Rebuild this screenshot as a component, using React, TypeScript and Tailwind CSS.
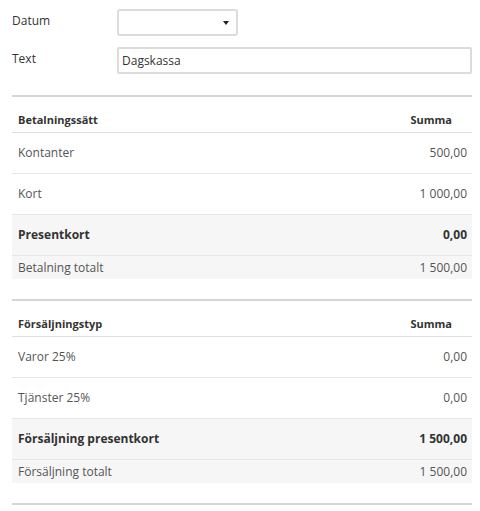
import React from "react";

type Row = { label: string; value: string; kind?: "bold" | "total" };

const payments: Row[] = [
  { label: "Kontanter", value: "500,00" },
  { label: "Kort", value: "1 000,00" },
  { label: "Presentkort", value: "0,00", kind: "bold" },
  { label: "Betalning totalt", value: "1 500,00", kind: "total" },
];

const sales: Row[] = [
  { label: "Varor 25%", value: "0,00" },
  { label: "Tjänster 25%", value: "0,00" },
  { label: "Försäljning presentkort", value: "1 500,00", kind: "bold" },
  { label: "Försäljning totalt", value: "1 500,00", kind: "total" },
];

function SumTable({ title, rows }: { title: string; rows: Row[] }) {
  return (
    <div>
      <div className="flex items-end justify-between border-b border-[#dedede] pt-[15px] pb-[4px] pl-[6px] pr-[20px] text-[11px] font-bold leading-[16px] text-[#333]">
        <span>{title}</span>
        <span>Summa</span>
      </div>
      {rows.map((r) => {
        if (r.kind === "total") {
          return (
            <div
              key={r.label}
              className="flex h-[23px] items-center justify-between bg-[#f6f6f6] pl-[6px] pr-[5px] text-[12px] text-[#555]"
            >
              <span>{r.label}</span>
              <span>{r.value}</span>
            </div>
          );
        }
        const bold = r.kind === "bold";
        return (
          <div
            key={r.label}
            className={
              bold
                ? "flex h-[41px] items-center justify-between border-b border-[#e6e6e6] bg-[#f6f6f6] pl-[6px] pr-[5px] text-[12px] font-bold text-[#333]"
                : "flex h-[41px] items-center justify-between border-b border-[#e6e6e6] pl-[6px] pr-[5px] text-[12px] text-[#555]"
            }
          >
            <span>{r.label}</span>
            <span>{r.value}</span>
          </div>
        );
      })}
    </div>
  );
}

export default function App() {
  return (
    <div className="min-h-[511px] bg-white pt-[9px] pl-3 font-['Open_Sans',sans-serif] text-[#333]">
      <div className="w-[460px]">
        {/* Datum */}
        <div className="flex items-start">
          <label className="w-[105px] pt-[3px] text-[12px] leading-[17px]">Datum</label>
          <div className="flex h-[27px] w-[121px] items-center justify-end rounded-[3px] border-2 border-[#dcdcdc] bg-white pr-[7px]">
            <span className="h-0 w-0 border-x-[3px] border-t-[4px] border-x-transparent border-t-[#222]" />
          </div>
        </div>

        {/* Text */}
        <div className="mt-[11px] flex items-start">
          <label className="w-[105px] pt-[3px] text-[12px] leading-[17px]">Text</label>
          <div className="flex h-[27px] flex-1 items-center rounded-[2px] border-2 border-[#dcdcdc] bg-white pl-[3px] text-[12px] text-[#333]">
            Dagskassa
          </div>
        </div>

        <div className="mt-[21px] h-[2px] bg-[#d6d6d6]" />
        <SumTable title="Betalningssätt" rows={payments} />

        <div className="mt-[20px] h-[2px] bg-[#d6d6d6]" />
        <SumTable title="Försäljningstyp" rows={sales} />

        <div className="mt-[20px] h-[2px] bg-[#d6d6d6]" />
      </div>
    </div>
  );
}
